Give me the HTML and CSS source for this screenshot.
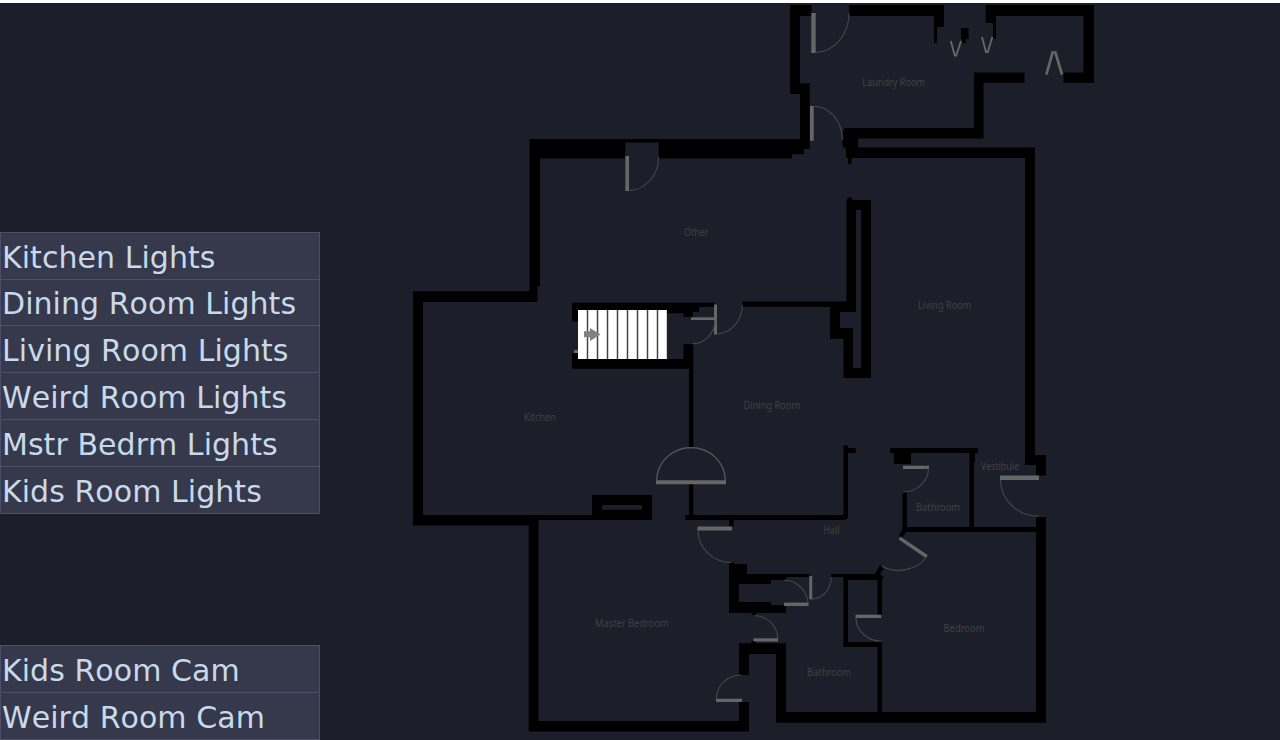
FILE: index.html
```html
<!DOCTYPE html>
<html lang="en">
<head>
<meta charset="utf-8">
<title>Floor Plan</title>
<link rel="stylesheet" href="styles.css">
</head>
<body>
<main class="dashboard">
  <nav class="sidebar">
    <ul class="menu">
      <li class="menu-item">Kitchen Lights</li>
      <li class="menu-item menu-item-short">Dining Room Lights</li>
      <li class="menu-item">Living Room Lights</li>
      <li class="menu-item">Weird Room Lights</li>
      <li class="menu-item">Mstr Bedrm Lights</li>
      <li class="menu-item">Kids Room Lights</li>
    </ul>
    <ul class="menu">
      <li class="menu-item">Kids Room Cam</li>
      <li class="menu-item">Weird Room Cam</li>
    </ul>
  </nav>
  <svg class="plan" viewBox="320 3 960 737" width="960" height="737">
    <!-- outer and inner walls -->
    <g class="walls">
      <path d="M790 5H811.5V16H800V83.5H809.7V149H804V154.3H792V158.5H540V286H537.5V302H423V515H592V495H652V520H538.5V721H739V702H749V731.5H528.7V525.5H413V291.3H529.5V139H800V94H790Z"/>
      <path d="M849 5H944V27H937V43H934V16H849Z"/>
      <path d="M985.7 5H1094V83H1063.5V72.5H1083.5V16H996V39H993V23H985.7Z"/>
      <path d="M961 28H968.5V39H966V43H962V39H961Z"/>
      <path d="M974 72.5H1024.5V83H983.5V138.5H858V147.5H1035V455H1046V475.5H1036V465H1025V158H851.5V164H848V158H846V149L842.5 146V134L844.5 128H974Z"/>
      <path d="M846.5 200L848 197.5H851.5L853 200H871V378H843.5V339H830V307H742.5V301.5H846.5Z"/>
      <path d="M572 302.7H715V307H699V312H693V317H683.5V313.3H667V310H578V321.5H572Z"/>
      <path d="M572 353H578V359H683.5V344H693.3V448H689V368.7H572Z"/>
      <path d="M689 484H693.3V515H843.5V445.5H848V448H855.7V453H848V518L845 520H733.7V526.5H729V520H685.3V515H689Z"/>
      <path d="M729 562.5H734V564H747V574H809.5V577H786V580H771V584H739V602H771V605H786V613H756V615H751.5V613H729Z"/>
      <path d="M751.5 641H756V643.3H786V712H877.5V647H843.5V577H831V574H875L880 565L884 568L880 574L883.5 577L882 580V615H877.5V580H848V642H882V712H1036V532H906L902 538L899 535L902.5 529V492H907V527H969.5V453H911V464H894V453H890V448H978V453H975V462H974V527H1036V517H1046V722.7H776V654H749V675H739V643.3H751.5Z"/>
    </g>
    <!-- wall cavities and openings -->
    <g class="floor">
      <rect x="625.3" y="142.5" width="33.4" height="17"/>
      <rect x="602" y="505" width="40" height="4.7"/>
      <path d="M856 210H861V368H853V328H840V312H856Z"/>
    </g>
    <!-- staircase -->
    <rect class="stairs" x="578" y="310" width="88.8" height="49"/>
    <path class="treads" d="M587.5 310V359M597.5 310V359M607.5 310V359M617.5 310V359M627.5 310V359M637.5 310V359M647.5 310V359M657.5 310V359"/>
    <path class="arrow" d="M584 331.3H590V328L600.5 334.4L590 341V337.3H584Z"/>
    <path class="leaf" d="M574 350H578V353H574Z"/>
    <!-- door leaves -->
    <g class="leaf">
      <path d="M811.3 13H815.7V53H811.3Z"/>
      <path d="M810 106H813.7V140.7H810Z"/>
      <path d="M625.3 156H629V191H625.3Z"/>
      <path d="M714 304.5H717V334.5H714Z"/>
      <path d="M691 317.3H714V320H691Z"/>
      <path d="M656 480.2H726V484.2H656Z"/>
      <path d="M697.5 526.5H732V530.4H697.5Z"/>
      <path d="M903 465.7H929V469H903Z"/>
      <path d="M1000 475.6H1039V480H1000Z"/>
      <path d="M784 602.6H808.5V606H784Z"/>
      <path d="M753.5 638.3H778V641.5H753.5Z"/>
      <path d="M809.3 576H812.2V599.3H809.3Z"/>
      <path d="M855.5 614.7H881.3V618H855.5Z"/>
      <path d="M716 698.7H742V702H716Z"/>
      <path d="M900.5 536.7L927.7 555L925.8 558L898.7 539.5Z"/>
    </g>
    <!-- door swings -->
    <path class="swing" d="M849 13A34 39.5 0 0 1 815 52.5M813.7 106.2A29 34 0 0 1 842.5 140M658.5 157A30 33.5 0 0 1 629 190.5M742.3 305A26 29 0 0 1 717 334M715 320A22 24 0 0 1 692 343.7M698 530A34 32 0 0 0 731.5 562.5M928.5 468A26 24 0 0 1 903 492M1000.5 480A39 36 0 0 0 1039 516.3M784 580.2A24 24 0 0 1 808 603M755 615.7A23 23 0 0 1 777.7 638M831.3 577A20 22 0 0 1 812 599M856 618A25 23 0 0 0 881 641M716.3 699A25 24 0 0 1 741.5 675M926 557.5A32 27 0 0 1 881.5 566"/>
    <path class="swing swing-double" d="M656.6 481A34.2 33.2 0 0 1 725.4 481"/>
    <!-- folding doors -->
    <path class="folding" d="M950.8 41L954.8 55.5H956.2L961 41M982 37L986 52H987.8L992.3 37"/>
    <path class="folding folding-wide" d="M1046.4 74.5L1053 51.2M1055 51.2L1062 74.5"/>
    <g class="labels">
      <text x="893.7" y="86.3" textLength="63" lengthAdjust="spacingAndGlyphs">Laundry Room</text>
      <text x="696.3" y="235.6" textLength="24.5" lengthAdjust="spacingAndGlyphs">Other</text>
      <text x="944.7" y="308.5" textLength="53.5" lengthAdjust="spacingAndGlyphs">Living Room</text>
      <text x="539.8" y="421" textLength="32" lengthAdjust="spacingAndGlyphs">Kitchen</text>
      <text x="771.8" y="409.3" textLength="56.5" lengthAdjust="spacingAndGlyphs">Dining Room</text>
      <text x="1000" y="469.5" textLength="38.5" lengthAdjust="spacingAndGlyphs">Vestibule</text>
      <text x="938" y="510.5" textLength="44" lengthAdjust="spacingAndGlyphs">Bathroom</text>
      <text x="831.5" y="534" textLength="16" lengthAdjust="spacingAndGlyphs">Hall</text>
      <text x="631.8" y="627" textLength="73.5" lengthAdjust="spacingAndGlyphs">Master Bedroom</text>
      <text x="964" y="632" textLength="41" lengthAdjust="spacingAndGlyphs">Bedroom</text>
      <text x="829" y="676" textLength="44" lengthAdjust="spacingAndGlyphs">Bathroom</text>
    </g>
  </svg>
</main>
</body>
</html>
```
FILE: styles.css
```css
body {
  margin: 0;
  background: #fff;
  font-family: "DejaVu Sans", sans-serif;
  overflow: hidden;
}

.dashboard {
  display: flex;
  height: 737px;
  margin-top: 3px;
  background: #1c1e29;
}

.sidebar {
  display: flex;
  flex: 0 0 320px;
  flex-direction: column;
  justify-content: flex-end;
  gap: 131px;
}

.menu {
  margin: 0;
  padding: 0;
  list-style: none;
  border: 1px solid #4e5069;
  border-top: 0;
  background: #36384b;
}

.menu-item {
  box-sizing: border-box;
  height: 47px;
  padding: 1px 1px 0;
  border-top: 1px solid #4e5069;
  color: #c8daea;
  font-size: 30px;
  font-kerning: none;
  letter-spacing: 0.05px;
  line-height: 47px;
  white-space: nowrap;
}

.menu-item-short {
  height: 46px;
  line-height: 46px;
}

.plan {
  display: block;
  flex: 0 0 960px;
}

.walls {
  fill: #000;
}

.floor {
  fill: #1c1e29;
}

.stairs {
  fill: #fff;
}

.treads {
  stroke: #444;
  stroke-width: 1.5;
}

.arrow {
  fill: #808080;
}

.leaf {
  fill: #666;
}

.swing {
  fill: none;
  stroke: #47484b;
  stroke-width: 1.1;
}

.swing-double {
  stroke: #5c5d60;
  stroke-width: 1.2;
}

.folding {
  fill: none;
  stroke: #666;
  stroke-width: 1.9;
}

.folding-wide {
  stroke-width: 2.7;
}

.labels {
  fill: #414141;
  font-family: "Noto Sans", sans-serif;
  font-size: 10px;
  text-anchor: middle;
}
```
